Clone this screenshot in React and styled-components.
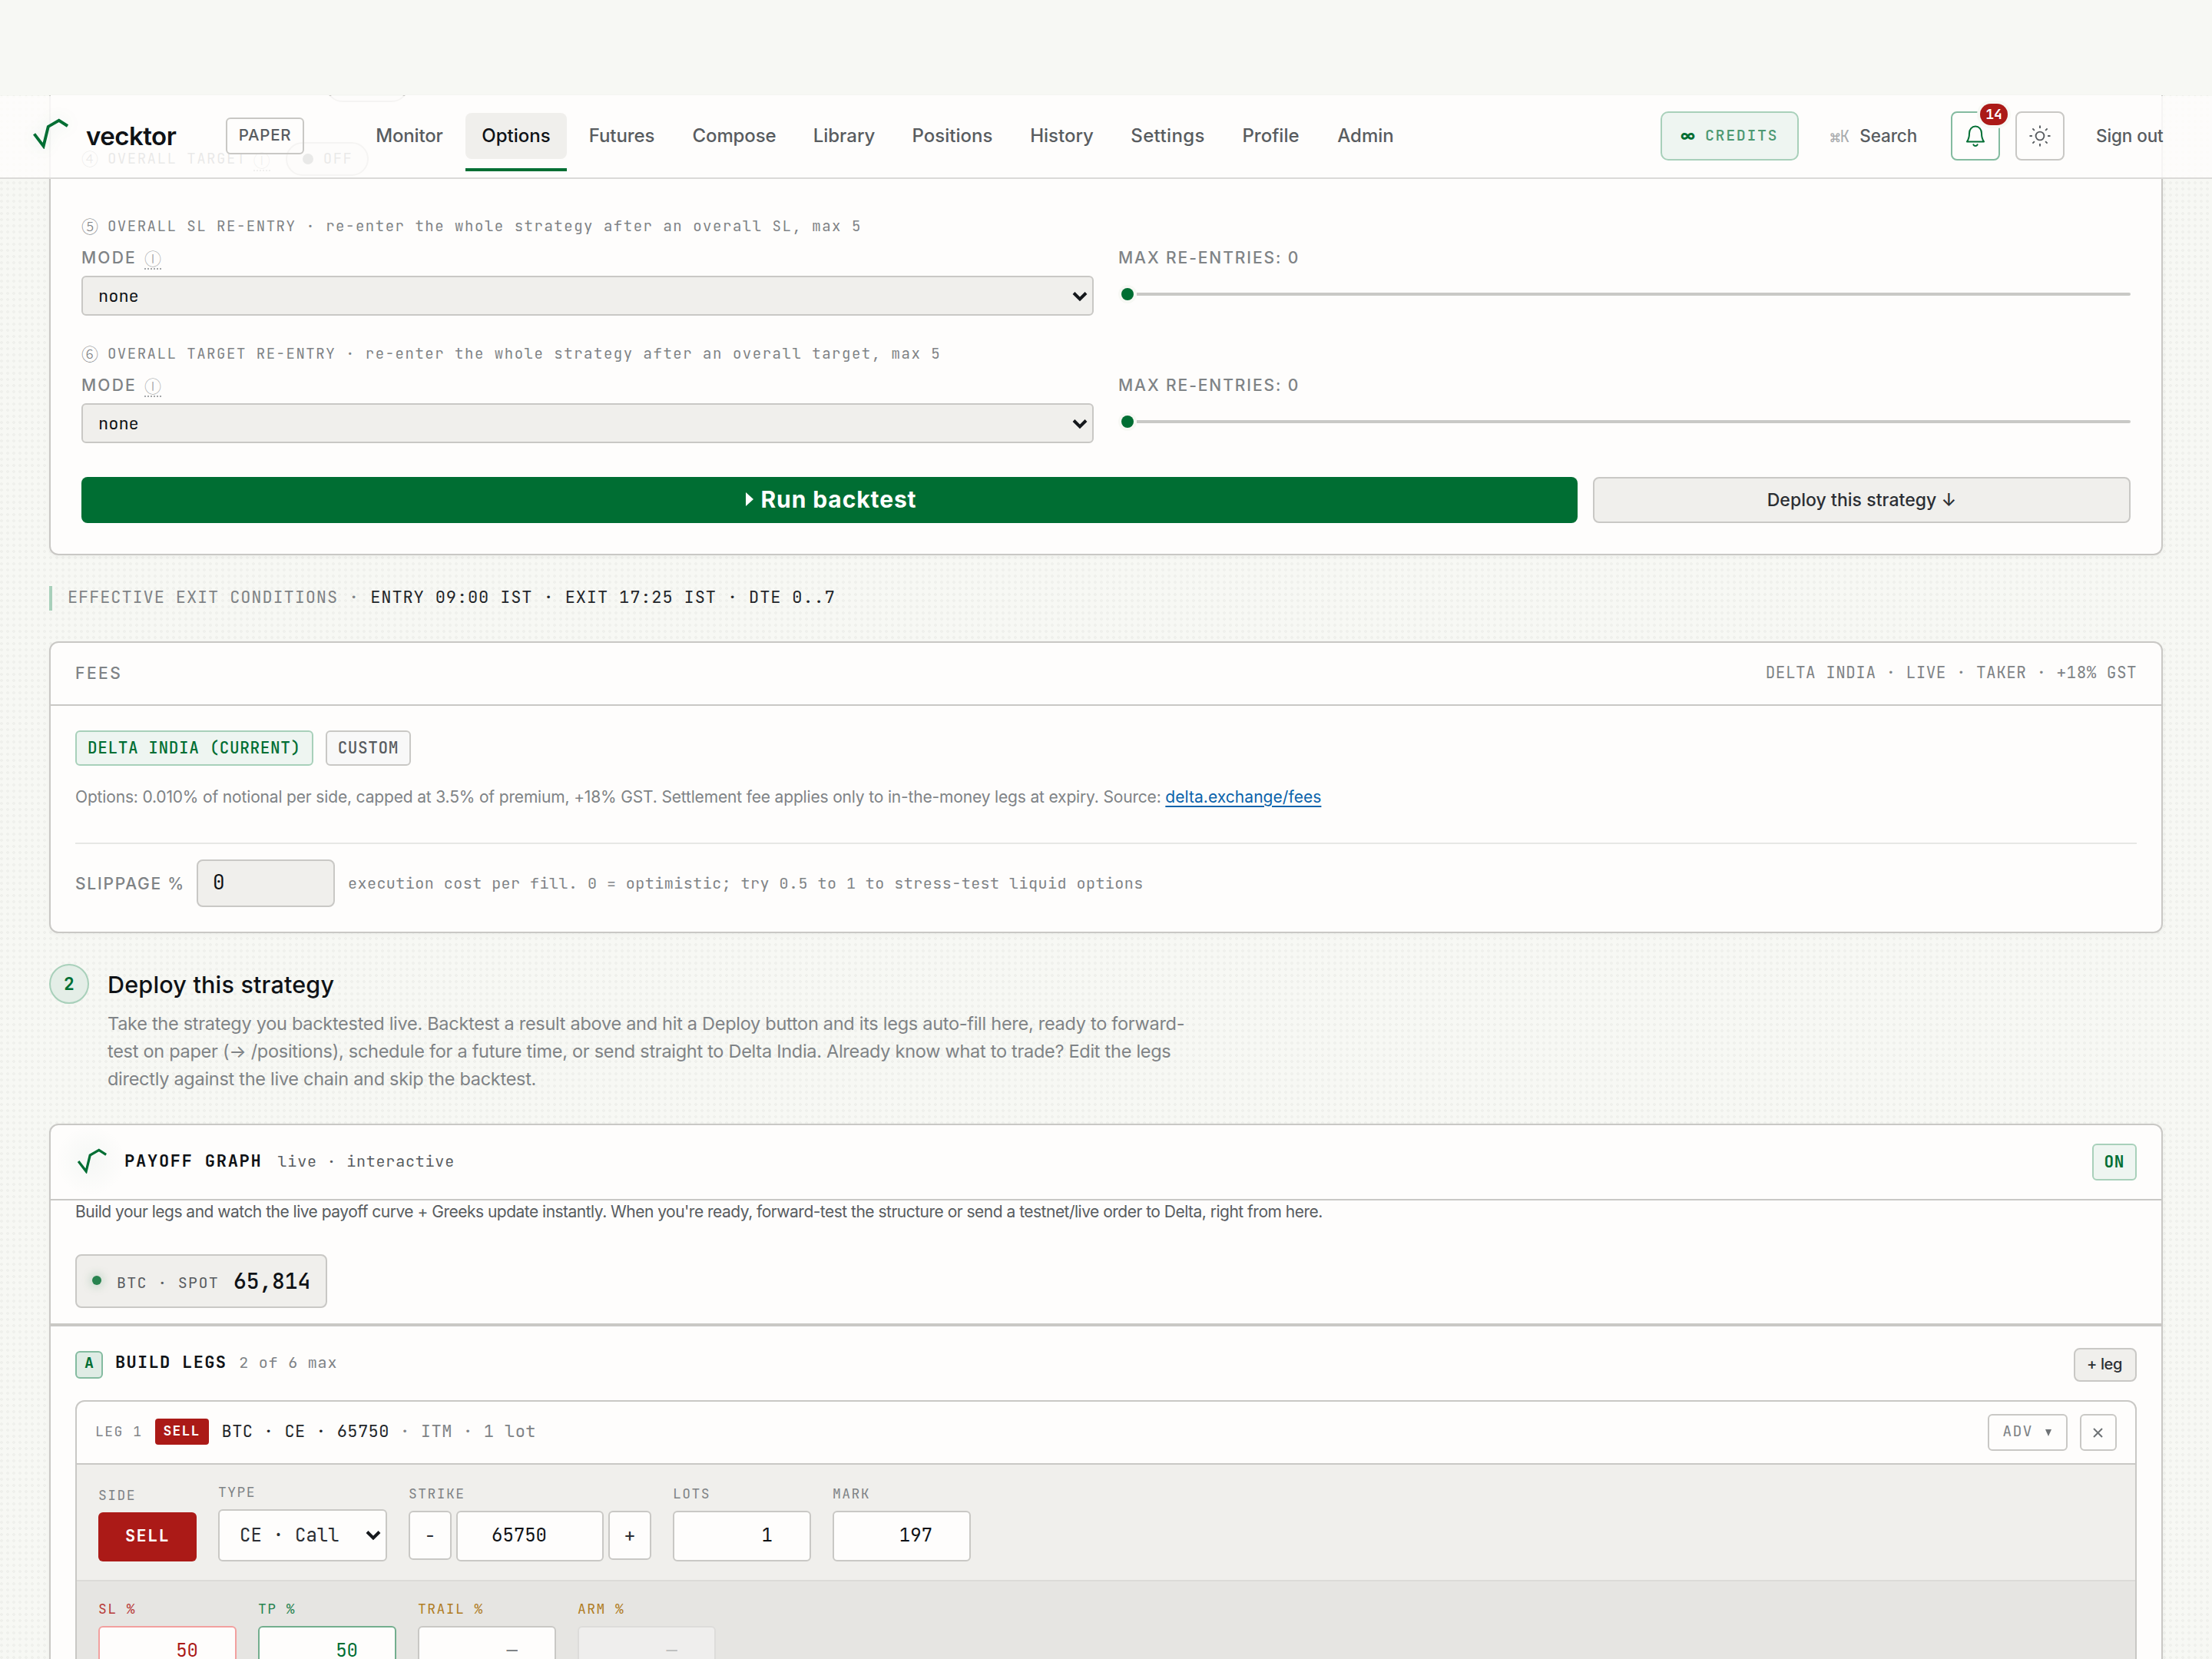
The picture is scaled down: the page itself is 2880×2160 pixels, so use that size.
import React, { useState } from 'react';
import styled, { createGlobalStyle, css } from 'styled-components';

const GlobalStyle = createGlobalStyle`
  :root {
    --sans: Inter, 'Liberation Sans', sans-serif;
    --mono: 'JetBrains Mono', 'Roboto Mono', 'Noto Sans Mono', monospace;
    --bg: #f7f8f4;
    --card: #fefdfc;
    --field: #f0efec;
    --line: #c9c8c5;
    --ink: #0f1216;
    --text: #2b2e33;
    --soft: #585c60;
    --muted: #7f8386;
    --green: #006e33;
    --green-line: #a8d0ba;
    --green-bg: #eef5f1;
    --red: #ab1a17;
  }

  * {
    box-sizing: border-box;
  }

  body {
    margin: 0;
    background: var(--bg);
    color: var(--ink);
    font-family: var(--sans);
  }

  button,
  input {
    font-family: inherit;
    margin: 0;
  }
`;

const Page = styled.div`
  position: relative;
  width: 2880px;
  height: 2160px;
  overflow: hidden;
  background-color: var(--bg);
  background-image: radial-gradient(circle at 2px 2px, #eff0ec 1.6px, transparent 2.2px);
  background-size: 8px 8px;
  background-position: 0 4px;
`;

const TopBand = styled.div`
  height: 124px;
  background: var(--bg);
`;

const Main = styled.main`
  display: flex;
  flex-direction: column;
  gap: 40px;
  padding: 0 64px;
`;

/* header */

const Header = styled.header`
  position: absolute;
  top: 125px;
  left: 0;
  right: 0;
  height: 108px;
  display: flex;
  align-items: center;
  padding: 0 62px 2px 42px;
  background: rgba(254, 253, 252, 0.84);
  border-bottom: 2px solid #dbdad8;
`;

const Brand = styled.div`
  display: flex;
  align-items: center;
  width: 252px;
  font-size: 33px;
  font-weight: 600;
  letter-spacing: -0.5px;
  line-height: 40px;

  svg {
    margin-bottom: 6px;
    filter: drop-shadow(0 0 10px rgba(0, 110, 51, 0.12));
  }

  span {
    margin-left: 23px;
  }
`;

const PaperTag = styled.span`
  width: 102px;
  height: 48px;
  border: 2px solid var(--line);
  border-radius: 6px;
  text-align: center;
  font-size: 20.5px;
  font-weight: 500;
  line-height: 42px;
  letter-spacing: 0.67px;
  color: var(--soft);
`;

const Nav = styled.nav`
  display: flex;
  gap: 8px;
  margin-left: 72px;
  flex: 1;
`;

const NavLink = styled.a`
  position: relative;
  width: ${({ $w }) => $w}px;
  height: 60px;
  border-radius: 8px;
  text-align: center;
  font-size: 24px;
  font-weight: 500;
  line-height: 59px;
  letter-spacing: ${({ $ls }) => $ls || 0}px;
  color: var(--soft);

  ${({ $active }) =>
    $active &&
    css`
      background: var(--field);
      color: var(--ink);

      &::after {
        content: '';
        position: absolute;
        left: 0;
        right: 0;
        bottom: -16px;
        height: 4px;
        background: var(--green);
      }
    `}
`;

const Credits = styled.div`
  width: 180px;
  height: 64px;
  display: flex;
  align-items: center;
  padding: 0 0 3px 24px;
  border: 2px solid var(--green-line);
  border-radius: 10px;
  background: var(--green-bg);
  color: #4c9871;
  font-family: var(--mono);
  font-size: 20px;
  font-weight: 500;
  letter-spacing: 1.6px;

  b {
    width: 32px;
    padding-top: 2px;
    font-family: var(--sans);
    font-size: 19px;
    font-weight: 800;
    letter-spacing: -1px;
    color: var(--green);
  }
`;

const HeaderText = styled.a`
  font-size: 22.5px;
  font-weight: 500;
  line-height: 30px;
  letter-spacing: -0.1px;
  white-space: nowrap;
  color: var(--soft);

  kbd {
    margin-right: 13px;
    font-family: var(--mono);
    font-size: 21px;
    font-weight: 400;
    letter-spacing: 0;
    color: #a9abae;
  }
`;

const SearchLink = styled(HeaderText)`
  width: 114px;
  margin: 0 43px 0 41px;
`;

const SignOut = styled(HeaderText)`
  width: 89px;
`;

const IconButton = styled.button`
  position: relative;
  width: 64px;
  height: 64px;
  padding: 0;
  display: flex;
  align-items: center;
  justify-content: center;
  border: 2px solid ${({ $on }) => ($on ? '#84bba0' : 'var(--line)')};
  border-radius: 8px;
  background: transparent;
  color: ${({ $on }) => ($on ? 'var(--green)' : 'var(--soft)')};
  margin-right: ${({ $right }) => $right}px;
`;

const Count = styled.span`
  position: absolute;
  top: -12px;
  right: -12px;
  width: 36px;
  height: 28px;
  border-radius: 14px;
  background: var(--red);
  box-shadow: 0 0 0 4px var(--bg);
  color: #fff;
  font-family: var(--mono);
  font-size: 18px;
  font-weight: 700;
  line-height: 28px;
  text-align: center;
`;

/* shared parts */

const Card = styled.section`
  border: 2px solid var(--line);
  border-radius: 12px;
  background: var(--card);
  box-shadow: 0 2px 6px rgba(20, 20, 10, 0.04);
`;

const Info = styled.abbr`
  display: inline-block;
  vertical-align: top;
  width: 22px;
  height: 30px;
  line-height: 28px;
  border-bottom: 2px dotted #a5a7a9;
  font-family: 'Noto Sans CJK JP', sans-serif;
  font-weight: 300;
  font-size: 22px;
  letter-spacing: 0;
  color: #a5a7a9;
  text-decoration: none;
`;

const Label = styled.span`
  height: 28px;
  line-height: 30px;
  font-size: 21px;
  font-weight: 500;
  letter-spacing: ${({ $ls }) => $ls}px;
  color: var(--muted);
  white-space: pre;

  ${Info} {
    margin-left: 10px;
  }
`;

const Circled = styled.span`
  width: 21px;
  margin-bottom: 4px;
  font-family: 'Noto Sans CJK JP', sans-serif;
  font-weight: 300;
  font-size: 22px;
  line-height: 20px;
  letter-spacing: 0;
`;

const Chip = styled.button`
  height: ${({ $h }) => $h || 46}px;
  padding: 0 14px;
  border: 2px solid ${({ $on }) => ($on ? 'var(--green-line)' : 'var(--line)')};
  border-radius: 6px;
  background: ${({ $on }) => ($on ? 'var(--green-bg)' : '#f8f8f8')};
  color: ${({ $on }) => ($on ? 'var(--green)' : 'var(--soft)')};
  font-family: var(--mono);
  font-size: 21px;
  font-weight: ${({ $strong }) => ($strong ? 700 : 500)};
  line-height: ${({ $h }) => ($h || 46) - 6}px;
  letter-spacing: 0.62px;
`;

/* strategy form */

const StrategyCard = styled(Card)`
  display: flex;
  flex-direction: column;
  height: 599px;
  padding: 0 40px;
  border-top: none;
  border-radius: 0 0 12px 12px;
`;

const Pill = styled.div`
  display: flex;
  align-items: center;
  width: 108px;
  height: 44px;
  flex-shrink: 0;
  padding-left: 20px;
  border: 2px solid var(--line);
  border-radius: 22px;
  background: #f8f8f6;
  font-family: var(--mono);
  font-size: 19px;
  letter-spacing: 1.5px;
  color: var(--muted);

  i {
    width: 14px;
    height: 14px;
    margin-right: 13px;
    border-radius: 50%;
    background: var(--muted);
  }
`;

/* lower edge of a row that is mostly above the fold */
const CutRow = styled.div`
  display: flex;
  align-items: flex-end;
  height: 9px;
  padding-left: 318px;
  overflow: hidden;
`;

const StepRow = styled.div`
  display: flex;
  align-items: center;
  height: ${({ $tall }) => ($tall ? 44 : 24)}px;
  margin-top: ${({ $top }) => $top}px;
  font-family: var(--mono);
  font-size: 19px;
  line-height: 24px;
  letter-spacing: 1.52px;
  color: var(--muted);
  white-space: pre;

  ${Info} {
    margin: 2px 20px 0 9px;
  }
`;

const FormGrid = styled.div`
  display: grid;
  grid-template-columns: 1fr 1fr;
  column-gap: 32px;
  margin-top: 14px;
`;

const FormField = styled.div`
  display: flex;
  flex-direction: column;
`;

const Select = styled.div`
  display: flex;
  align-items: center;
  justify-content: space-between;
  height: 52px;
  margin-top: 10px;
  padding: 1px 6px 0 20px;
  border: 2px solid var(--line);
  border-radius: 6px;
  background: var(--field);
  font-family: var(--mono);
  font-size: 22px;
  line-height: 48px;
  color: var(--ink);
`;

const Slider = styled.div`
  display: flex;
  align-items: center;
  height: 24px;
  margin-top: 22px;

  &::before {
    content: '';
    width: 16px;
    height: 16px;
    margin: 0 4px;
    border-radius: 50%;
    background: var(--green);
    box-shadow: 0 0 0 4px var(--bg);
  }

  &::after {
    content: '';
    flex: 1;
    height: 4px;
    border-radius: 0 2px 2px 0;
    background: #c9c9c6;
  }
`;

const Actions = styled.div`
  display: grid;
  grid-template-columns: 1948px 1fr;
  gap: 20px;
  margin-top: 44px;
`;

const RunButton = styled.button`
  display: flex;
  align-items: center;
  justify-content: center;
  gap: 10px;
  height: 60px;
  padding: 0 0 2px 4px;
  border: none;
  border-radius: 8px;
  background: var(--green);
  color: #fff;
  font-size: 30px;
  font-weight: 700;
  letter-spacing: 0.9px;
`;

const DeployButton = styled.button`
  height: 60px;
  padding: 0 0 1px;
  border: 2px solid var(--line);
  border-radius: 8px;
  background: var(--field);
  color: var(--text);
  font-size: 23px;
  font-weight: 500;
  letter-spacing: 0.05px;
`;

const ExitLine = styled.p`
  height: 32px;
  margin: 0;
  padding-left: 20px;
  border-left: 4px solid var(--green-line);
  font-family: var(--mono);
  font-size: 22px;
  line-height: 30px;
  letter-spacing: 0.88px;
  color: var(--muted);
  white-space: pre;

  span {
    color: #23262a;
  }
`;

/* fees */

const FeesCard = styled(Card)`
  height: 380px;
`;

const FeesHead = styled.div`
  display: flex;
  align-items: center;
  justify-content: space-between;
  height: 82px;
  padding: 0 32px 2px;
  border-bottom: 2px solid var(--line);
`;

const FeesMeta = styled.span`
  font-family: var(--mono);
  font-size: 21px;
  letter-spacing: 0.46px;
  line-height: 32px;
  color: var(--muted);
`;

const FeesBody = styled.div`
  padding: 32px;
`;

const Chips = styled.div`
  display: flex;
  gap: 16px;
`;

const FeeNote = styled.p`
  margin: 25px 0 43px;
  font-size: 21px;
  line-height: 32px;
  letter-spacing: -0.165px;
  color: var(--muted);

  a {
    color: #0a63ab;
    letter-spacing: 0.05px;
    text-decoration: underline;
    text-decoration-thickness: 2px;
    text-underline-offset: 4px;
  }
`;

const Slippage = styled.div`
  display: flex;
  align-items: center;
  padding-top: 20px;
  border-top: 2px solid #e7e7e5;
`;

const SlippageInput = styled.input`
  width: 180px;
  height: 62px;
  margin: 0 17px 0 15px;
  padding: 0 0 4px 19px;
  border: 2px solid var(--line);
  border-radius: 8px;
  background: var(--field);
  color: var(--ink);
  font-family: var(--mono);
  font-size: 26px;
`;

const Hint = styled.span`
  font-family: var(--mono);
  font-size: 20px;
  letter-spacing: 0.48px;
  color: var(--muted);
`;

/* step heading */

const Step = styled.section`
  display: flex;
  gap: 24px;
  height: 168px;
`;

const StepNumber = styled.div`
  width: 52px;
  height: 52px;
  border: 2px solid var(--green-line);
  border-radius: 50%;
  background: #e4eee7;
  color: var(--green);
  font-family: var(--mono);
  font-size: 23px;
  font-weight: 700;
  line-height: 48px;
  text-align: center;
`;

const StepTitle = styled.h2`
  margin: 9px 0 15px;
  font-size: 30.5px;
  font-weight: 500;
  line-height: 36px;
  letter-spacing: 0.2px;
`;

const StepText = styled.p`
  margin: 0;
  font-size: 23.5px;
  line-height: 36px;
  letter-spacing: -0.28px;
  color: var(--muted);
`;

/* payoff */

const PayoffHead = styled.div`
  display: flex;
  align-items: center;
  height: 98px;
  padding: 0 32px 0 34px;
  border-bottom: 2px solid var(--line);
  border-radius: 10px 10px 0 0;
  background: radial-gradient(circle at 52px 46px, rgba(0, 80, 50, 0.035), transparent 46px);

  > svg {
    margin-bottom: 3px;
  }
`;

const Title = styled.span`
  margin-left: ${({ $left }) => $left}px;
  padding-bottom: ${({ $lift }) => $lift}px;
  font-family: var(--mono);
  font-size: 22px;
  font-weight: 600;
  line-height: 30px;
  letter-spacing: ${({ $ls }) => $ls}px;
  color: var(--ink);
`;

const SubTitle = styled.span`
  flex: 1;
  margin-left: ${({ $left }) => $left}px;
  padding-bottom: ${({ $lift }) => $lift}px;
  font-family: var(--mono);
  font-size: 20px;
  line-height: 30px;
  letter-spacing: 0.8px;
  color: ${({ $soft }) => ($soft ? 'var(--soft)' : 'var(--muted)')};
`;

const PayoffNote = styled.p`
  margin: 0 32px 40px;
  font-size: 21px;
  line-height: 30px;
  letter-spacing: -0.51px;
  color: var(--soft);
`;

const Spot = styled.div`
  display: flex;
  align-items: center;
  width: 328px;
  height: 70px;
  margin: 0 32px 20px;
  padding-left: 20px;
  border: 2px solid var(--line);
  border-radius: 8px;
  background: var(--field);
  font-family: var(--mono);
  font-size: 20px;
  line-height: 28px;
  letter-spacing: 1.3px;
  color: var(--soft);

  i {
    width: 12px;
    height: 12px;
    margin: 0 20px 2px 0;
    border-radius: 50%;
    background: #27834f;
    box-shadow: 0 0 14px rgba(0, 110, 51, 0.4);
  }

  span {
    padding-top: 4px;
  }

  strong {
    margin-left: 19px;
    padding-bottom: 1px;
    font-size: 28px;
    font-weight: 500;
    letter-spacing: -0.1px;
    color: var(--ink);
  }
`;

const Build = styled.div`
  padding: 28px 32px 0;
  border-top: 4px solid var(--line);
`;

const BuildHead = styled.div`
  display: flex;
  align-items: center;
  height: 44px;
  margin-bottom: 24px;
`;

const Letter = styled.span`
  width: 36px;
  height: 36px;
  border: 2px solid #84bba0;
  border-radius: 6px;
  background: #dfece5;
  color: var(--green);
  font-family: var(--mono);
  font-size: 20px;
  font-weight: 700;
  line-height: 27px;
  text-align: center;
`;

const AddLeg = styled.button`
  width: 82px;
  height: 44px;
  padding: 0 2px 2px 0;
  border: 2px solid var(--line);
  border-radius: 8px;
  background: var(--field);
  color: var(--text);
  font-size: 20px;
  font-weight: 500;
  letter-spacing: -0.4px;
`;

const Leg = styled.div`
  border: 2px solid var(--line);
  border-radius: 12px;
  overflow: hidden;
`;

const LegHead = styled.div`
  display: flex;
  align-items: center;
  height: 82px;
  padding: 0 24px;
  border-bottom: 2px solid var(--line);
  font-family: var(--mono);
`;

const LegNumber = styled.span`
  padding-bottom: 3px;
  font-size: 18px;
  letter-spacing: 1.5px;
  color: var(--muted);
`;

const SideTag = styled.span`
  width: 70px;
  height: 34px;
  margin: 0 17px 2px 16px;
  border-radius: 4px;
  background: var(--red);
  color: #fff;
  font-size: 18px;
  font-weight: 700;
  line-height: 31px;
  letter-spacing: 1.2px;
  text-align: center;
`;

const LegName = styled.span`
  flex: 1;
  padding-bottom: 3px;
  font-size: 22px;
  letter-spacing: 0.45px;
  color: var(--muted);
  white-space: pre;

  span {
    color: #23262a;
  }
`;

const LegButton = styled.button`
  display: flex;
  align-items: center;
  justify-content: center;
  gap: 16px;
  width: ${({ $w }) => $w}px;
  height: 48px;
  margin-left: 16px;
  padding: 0 2px 0 0;
  border: 2px solid var(--line);
  border-radius: 6px;
  background: transparent;
  color: var(--muted);
  font-family: var(--mono);
  font-size: 20px;
  line-height: 40px;
  letter-spacing: 1.2px;

  span {
    padding-bottom: 4px;
  }
`;

const FieldRow = styled.div`
  display: flex;
  align-items: flex-end;
  gap: 28px;
  padding: 26px 28px 24px;
  background: var(--field);

  & + & {
    align-items: flex-start;
    background: #e6e5e2;
    border-top: 2px solid #dcdbd8;
  }
`;

const Field = styled.div`
  display: flex;
  flex-direction: column;
  gap: 12px;
`;

const FieldLabel = styled.span`
  font-family: var(--mono);
  font-size: 18px;
  line-height: 20px;
  letter-spacing: 1.44px;
  color: ${({ $color }) => $color || 'var(--muted)'};
`;

const SideButton = styled.button`
  width: 128px;
  height: 64px;
  padding: 0 0 4px;
  border: none;
  border-radius: 6px;
  background: var(--red);
  color: #fff;
  font-family: var(--mono);
  font-size: 22px;
  font-weight: 700;
  letter-spacing: 1.32px;
`;

const TypeSelect = styled.div`
  display: flex;
  align-items: center;
  justify-content: space-between;
  width: 220px;
  height: 68px;
  padding: 0 6px 0 26px;
  border: 2px solid var(--line);
  border-radius: 6px;
  background: var(--card);
  color: var(--text);
  font-family: var(--mono);
  font-size: 24px;
  line-height: 60px;
`;

const Stepper = styled.div`
  display: flex;
  align-items: flex-start;
  gap: 6px;
`;

const StepButton = styled.button`
  width: 56px;
  height: 64px;
  padding: 0;
  border: 2px solid var(--line);
  border-radius: 6px;
  background: var(--card);
  color: var(--text);
  font-family: var(--mono);
  font-size: 24px;
`;

const NumberInput = styled.input`
  width: ${({ $w }) => $w || 180}px;
  height: 66px;
  padding: 0 48px 4px 20px;
  border: 2px solid ${({ $line }) => $line || 'var(--line)'};
  border-radius: 6px;
  background: ${({ $off }) => ($off ? '#efeeed' : 'var(--card)')};
  color: ${({ $color }) => $color || 'var(--ink)'};
  font-family: var(--mono);
  font-size: 24px;
  text-align: ${({ $center }) => ($center ? 'center' : 'right')};
`;

const navLinks = [
  { name: 'Monitor', w: 130, ls: -0.18 },
  { name: 'Options', w: 132 },
  { name: 'Futures', w: 127, ls: -0.1 },
  { name: 'Compose', w: 150, ls: -0.13 },
  { name: 'Library', w: 120 },
  { name: 'Positions', w: 146 },
  { name: 'History', w: 123 },
  { name: 'Settings', w: 137, ls: 0.35 },
  { name: 'Profile', w: 115 },
  { name: 'Admin', w: 116 },
];

const reEntries = [
  { mark: '⑤', text: ' OVERALL SL RE-ENTRY · re-enter the whole strategy after an overall SL, max 5', top: 54 },
  { mark: '⑥', text: ' OVERALL TARGET RE-ENTRY · re-enter the whole strategy after an overall target, max 5', top: 38 },
];

const Mark = ({ width }) => (
  <svg
    width={width}
    height={(width * 40) / 46}
    viewBox="0 0 46 40"
    fill="none"
    stroke="#006e33"
    strokeWidth="3.8"
  >
    <path d="M2.5 20 L14.3 35.5 L20.3 10.7 L34 2.8 L45 9.8" />
  </svg>
);

const Chevron = () => (
  <svg width="20" height="14" viewBox="0 0 20 14" fill="none" stroke="#15181c" strokeWidth="4">
    <path d="M2 2.5 L10 10.5 L18 2.5" />
  </svg>
);

const Bell = () => (
  <svg width="26" height="30" viewBox="0 0 26 30" fill="none" stroke="currentColor" strokeWidth="2">
    <path
      d="M2 22.4 C4 19.6 5 16.8 5 11.5 C5 6.2 8.4 2.6 13 2.6 C17.6 2.6 21 6.2 21 11.5 C21 16.8 22 19.6 24 22.4 Z"
      strokeLinejoin="round"
    />
    <path d="M10.4 26.4 C11.6 28.4 14.4 28.4 15.6 26.4" strokeLinecap="round" />
  </svg>
);

const Sun = () => (
  <svg width="30" height="30" viewBox="0 0 30 30" fill="none" stroke="currentColor" strokeWidth="1.9">
    <circle cx="15" cy="15" r="5.4" />
    <path d="M15 1.5v3.4M15 25.1v3.4M1.5 15h3.4M25.1 15h3.4M5.4 5.4l2.5 2.5M22.1 22.1l2.5 2.5M5.4 24.6l2.5-2.5M22.1 7.9l2.5-2.5" />
  </svg>
);

const TopHeader = () => (
  <Header>
    <Brand>
      <Mark width={47} />
      <span>vecktor</span>
    </Brand>
    <PaperTag>PAPER</PaperTag>
    <Nav>
      {navLinks.map(({ name, w, ls }) => (
        <NavLink key={name} $w={w} $ls={ls} $active={name === 'Options'}>
          {name}
        </NavLink>
      ))}
    </Nav>
    <Credits>
      <b>∞</b>
      CREDITS
    </Credits>
    <SearchLink>
      <kbd>⌘K</kbd>
      Search
    </SearchLink>
    <IconButton $on $right={20}>
      <Bell />
      <Count>14</Count>
    </IconButton>
    <IconButton $right={41}>
      <Sun />
    </IconButton>
    <SignOut>Sign out</SignOut>
  </Header>
);

const Strategy = () => (
  <StrategyCard>
    <CutRow>
      <Pill />
    </CutRow>
    <StepRow $top={52} $tall>
      <Circled>④</Circled> OVERALL TARGET
      <Info>Ⓘ</Info>
      <Pill>
        <i />
        OFF
      </Pill>
    </StepRow>
    {reEntries.map(({ mark, text, top }) => (
      <React.Fragment key={mark}>
        <StepRow $top={top}>
          <Circled>{mark}</Circled>
          {text}
        </StepRow>
        <FormGrid>
          <FormField>
            <Label $ls={2.2}>
              MODE
              <Info>Ⓘ</Info>
            </Label>
            <Select>
              none
              <Chevron />
            </Select>
          </FormField>
          <FormField>
            <Label $ls={1.92}>MAX RE-ENTRIES: 0</Label>
            <Slider />
          </FormField>
        </FormGrid>
      </React.Fragment>
    ))}
    <Actions>
      <RunButton>
        <svg width="10" height="18" viewBox="0 0 10 18" fill="#fff">
          <path d="M0 0 L10 9 L0 18 Z" />
        </svg>
        Run backtest
      </RunButton>
      <DeployButton>Deploy this strategy ↓</DeployButton>
    </Actions>
  </StrategyCard>
);

const Fees = () => {
  const [slippage, setSlippage] = useState('0');

  return (
    <FeesCard>
      <FeesHead>
        <Label $ls={2.5}>FEES</Label>
        <FeesMeta>DELTA INDIA · LIVE · TAKER · +18% GST</FeesMeta>
      </FeesHead>
      <FeesBody>
        <Chips>
          <Chip $on>DELTA INDIA (CURRENT)</Chip>
          <Chip>CUSTOM</Chip>
        </Chips>
        <FeeNote>
          Options: 0.010% of notional per side, capped at 3.5% of premium, +18% GST. Settlement fee
          applies only to in-the-money legs at expiry. Source: <a>delta.exchange/fees</a>
        </FeeNote>
        <Slippage>
          <Label $ls={1.75}>SLIPPAGE %</Label>
          <SlippageInput value={slippage} onChange={(e) => setSlippage(e.target.value)} />
          <Hint>
            execution cost per fill. 0 = optimistic; try 0.5 to 1 to stress-test liquid options
          </Hint>
        </Slippage>
      </FeesBody>
    </FeesCard>
  );
};

const LegCard = () => (
  <Leg>
    <LegHead>
      <LegNumber>LEG 1</LegNumber>
      <SideTag>SELL</SideTag>
      <LegName>
        <span>BTC · CE · 65750</span> · ITM · 1 lot
      </LegName>
      <LegButton $w={104}>
        <span>ADV</span>
        <svg width="8" height="9" viewBox="0 0 8 9" fill="#6f7376">
          <path d="M0 0 H8 L4 9 Z" />
        </svg>
      </LegButton>
      <LegButton $w={48}>
        <svg width="13" height="13" viewBox="0 0 13 13" stroke="#6f7376" strokeWidth="2">
          <path d="M1 1 L12 12 M12 1 L1 12" />
        </svg>
      </LegButton>
    </LegHead>
    <FieldRow>
      <Field>
        <FieldLabel>SIDE</FieldLabel>
        <SideButton>SELL</SideButton>
      </Field>
      <Field>
        <FieldLabel>TYPE</FieldLabel>
        <TypeSelect>
          CE · Call
          <Chevron />
        </TypeSelect>
      </Field>
      <Field>
        <FieldLabel>STRIKE</FieldLabel>
        <Stepper>
          <StepButton>-</StepButton>
          <NumberInput $w={192} $center defaultValue="65750" />
          <StepButton>+</StepButton>
        </Stepper>
      </Field>
      <Field>
        <FieldLabel>LOTS</FieldLabel>
        <NumberInput defaultValue="1" />
      </Field>
      <Field>
        <FieldLabel>MARK</FieldLabel>
        <NumberInput defaultValue="197" />
      </Field>
    </FieldRow>
    <FieldRow>
      <Field>
        <FieldLabel $color="#b83a38">SL %</FieldLabel>
        <NumberInput $line="#f2a09f" $color="#ab1a17" defaultValue="50" />
      </Field>
      <Field>
        <FieldLabel $color="#27834f">TP %</FieldLabel>
        <NumberInput $line="#73ae8e" $color="#006e33" defaultValue="50" />
      </Field>
      <Field>
        <FieldLabel $color="#b07c22">TRAIL %</FieldLabel>
        <NumberInput $color="#7f8386" defaultValue="—" />
      </Field>
      <Field>
        <FieldLabel $color="#b07c22">ARM %</FieldLabel>
        <NumberInput $off $line="#dddcda" $color="#bfc0c0" defaultValue="—" />
      </Field>
    </FieldRow>
  </Leg>
);

export default function App() {
  return (
    <>
      <GlobalStyle />
      <Page>
        <TopBand />
        <Main>
          <Strategy />
          <ExitLine>
            EFFECTIVE EXIT CONDITIONS · <span>ENTRY 09:00 IST · EXIT 17:25 IST · DTE 0..7</span>
          </ExitLine>
          <Fees />
          <Step>
            <StepNumber>2</StepNumber>
            <div>
              <StepTitle>Deploy this strategy</StepTitle>
              <StepText>
                Take the strategy you backtested live. Backtest a result above and hit a Deploy button
                and its legs auto-fill here, ready to forward-
                <br />
                test on paper (→ /positions), schedule for a future time, or send straight to Delta
                India. Already know what to trade? Edit the legs
                <br />
                directly against the live chain and skip the backtest.
              </StepText>
            </div>
          </Step>
          <Card>
            <PayoffHead>
              <Mark width={39} />
              <Title $left={23} $lift={3} $ls={1.76}>
                PAYOFF GRAPH
              </Title>
              <SubTitle $left={20} $lift={2} $soft>
                live · interactive
              </SubTitle>
              <Chip $on $strong $h={48}>
                ON
              </Chip>
            </PayoffHead>
            <PayoffNote>
              Build your legs and watch the live payoff curve + Greeks update instantly. When you're
              ready, forward-test the structure or send a testnet/live order to Delta, right from
              here.
            </PayoffNote>
            <Spot>
              <i />
              <span>BTC · SPOT</span>
              <strong>65,814</strong>
            </Spot>
            <Build>
              <BuildHead>
                <Letter>A</Letter>
                <Title $left={16} $lift={7} $ls={1.32}>
                  BUILD LEGS
                </Title>
                <SubTitle $left={16} $lift={6}>
                  2 of 6 max
                </SubTitle>
                <AddLeg>+ leg</AddLeg>
              </BuildHead>
              <LegCard />
            </Build>
          </Card>
        </Main>
        <TopHeader />
      </Page>
    </>
  );
}
